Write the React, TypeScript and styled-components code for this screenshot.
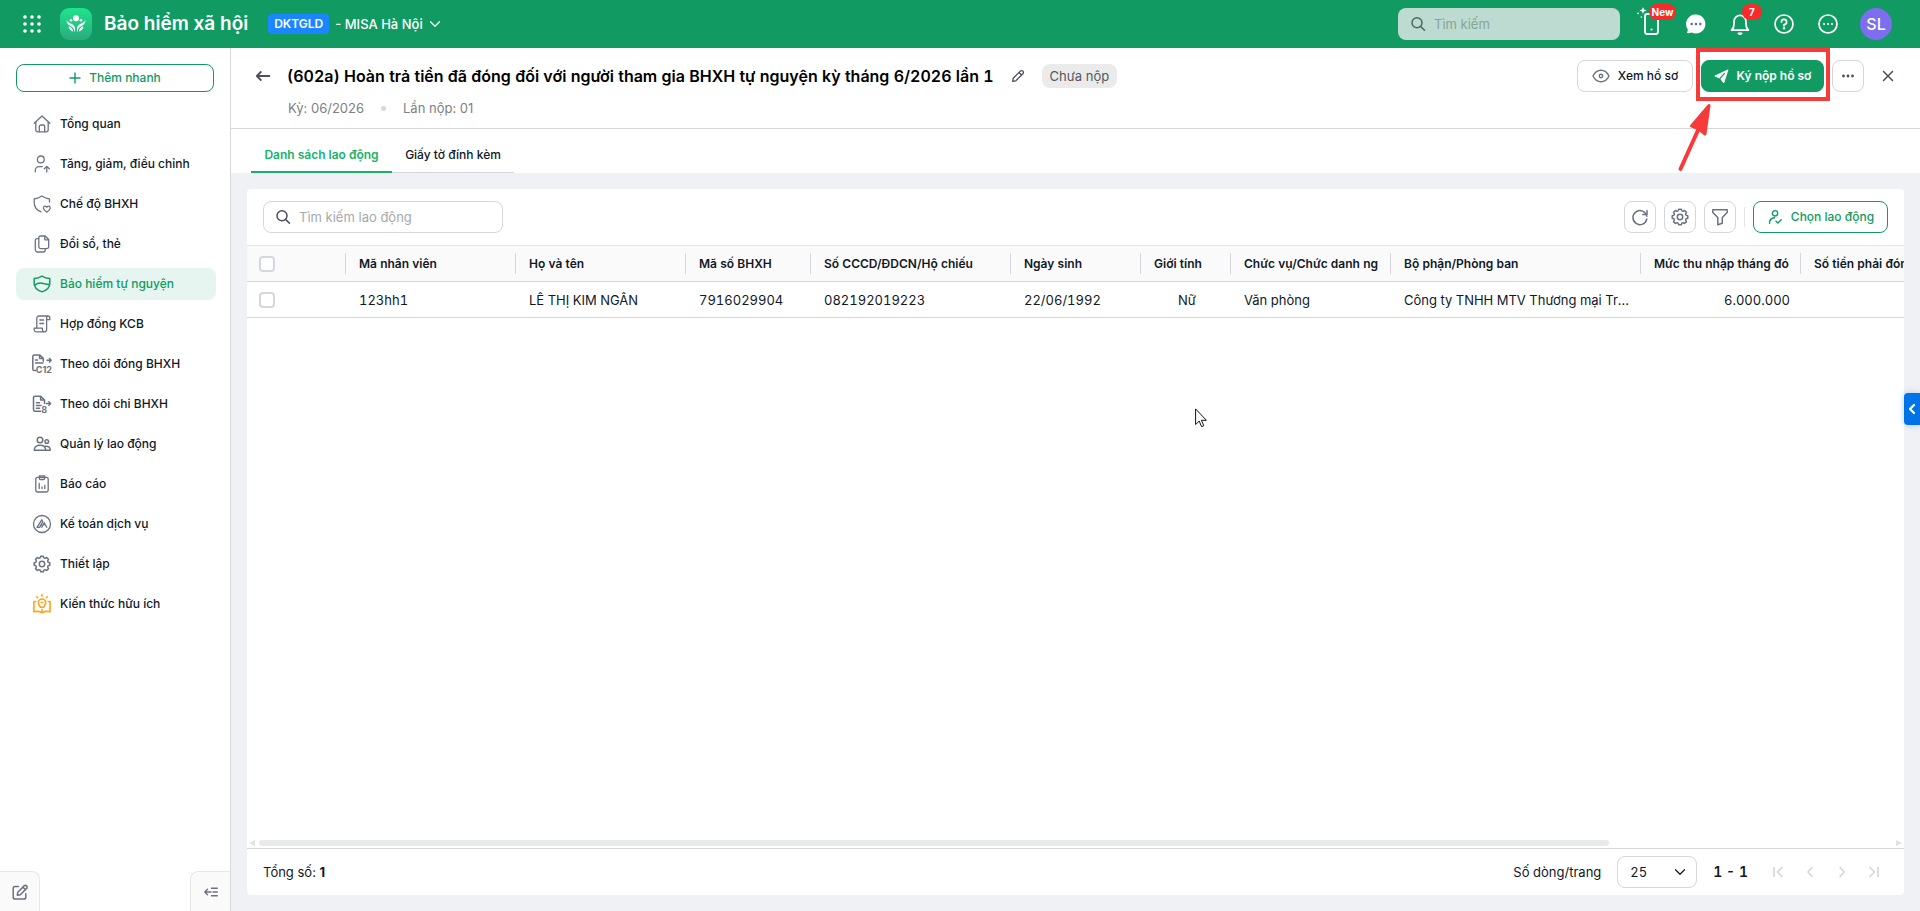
import React from "react";
import styled, { createGlobalStyle } from "styled-components";

const GlobalStyle = createGlobalStyle`
  * { box-sizing: border-box; }
  body { margin: 0; }
  body, button, input, select, table {
    font-family: Inter, "Liberation Sans", sans-serif;
    font-size: 13px;
    line-height: 20px;
    color: #111827;
  }
  button { cursor: pointer; padding: 0; margin: 0; }
  a { text-decoration: none; color: inherit; }
`;

const GREEN = "#119a62";
const LINE = "#d5d7dc";
const ICON = "#6b7280";

/* ---------- layout ---------- */
const Page = styled.div`
  display: flex;
  flex-direction: column;
  min-height: 100vh;
  background: #f0f1f4;
`;
const TopBar = styled.header`
  display: flex;
  align-items: center;
  height: 48px;
  padding: 0 28px 0 16px;
  background: ${GREEN};
  color: #fff;
`;
const Body = styled.div`
  display: flex;
  flex: 1;
`;
const Sidebar = styled.aside`
  display: flex;
  flex-direction: column;
  flex: none;
  width: 231px;
  background: #fff;
  border-right: 1px solid ${LINE};
`;
const Main = styled.main`
  display: flex;
  flex-direction: column;
  flex: 1;
  min-width: 0;
`;

/* ---------- top bar ---------- */
const BarButton = styled.button<{ $w?: number }>`
  position: relative;
  display: flex;
  align-items: center;
  justify-content: center;
  flex: none;
  width: ${(p) => p.$w ?? 44}px;
  height: 48px;
  border: 0;
  background: none;
  color: #fff;
`;
const Logo = styled.svg`
  flex: none;
  margin: 0 12px;
`;
const AppName = styled.h1`
  margin: 0 20px 0 0;
  font-size: 19px;
  line-height: 24px;
  font-weight: 600;
`;
const CompanyTag = styled.span`
  margin-right: 6px;
  padding: 0 6px;
  border-radius: 4px;
  background: #1a86ff;
  font-size: 12px;
  font-weight: 600;
`;
const Company = styled.button`
  display: flex;
  align-items: center;
  gap: 6px;
  border: 0;
  background: none;
  color: #fff;
  font-weight: 500;
`;
const Spacer = styled.div`
  flex: 1;
`;
const GlobalSearch = styled.label`
  display: flex;
  align-items: center;
  gap: 8px;
  width: 222px;
  height: 32px;
  padding: 0 12px;
  margin-right: 10px;
  border-radius: 8px;
  background: #bddbd0;
  color: #4b6b60;
`;
const PlainInput = styled.input<{ $hint: string }>`
  flex: 1;
  min-width: 0;
  padding: 0;
  border: 0;
  outline: 0;
  background: none;
  &::placeholder { color: ${(p) => p.$hint}; opacity: 1; }
`;
const Badge = styled.span<{ $left: number; $w: number }>`
  position: absolute;
  top: 4px;
  left: ${(p) => p.$left}px;
  width: ${(p) => p.$w}px;
  height: 16px;
  border-radius: 8px;
  background: #f92a2a;
  color: #fff;
  font-size: 10px;
  line-height: 16px;
  font-weight: 700;
  text-align: center;
`;
const Avatar = styled.button`
  width: 32px;
  height: 32px;
  margin-left: 10px;
  border: 0;
  border-radius: 50%;
  background: #7c6eee;
  color: #fff;
  font-size: 16px;
  font-weight: 500;
`;

/* ---------- sidebar ---------- */
const QuickAdd = styled.button`
  display: flex;
  align-items: center;
  justify-content: center;
  gap: 8px;
  height: 28px;
  margin: 16px;
  border: 1px solid ${GREEN};
  border-radius: 8px;
  background: #fff;
  color: ${GREEN};
  font-size: 12px;
  font-weight: 500;
`;
const Nav = styled.nav`
  display: flex;
  flex-direction: column;
  gap: 8px;
  padding: 0 14px 0 16px;
`;
const NavLink = styled.a<{ $active?: boolean }>`
  display: flex;
  align-items: center;
  gap: 8px;
  height: 32px;
  padding-left: 16px;
  border-radius: 8px;
  font-size: 12px;
  font-weight: 500;
  background: ${(p) => (p.$active ? "#e6f5ef" : "none")};
  color: ${(p) => (p.$active ? GREEN : "#111827")};
  svg { color: ${(p) => (p.$active ? GREEN : ICON)}; }
`;
const SideFoot = styled.div`
  display: flex;
  justify-content: space-between;
  margin-top: auto;
`;
const CornerButton = styled.button<{ $side: "left" | "right" }>`
  display: flex;
  align-items: center;
  justify-content: center;
  width: 40px;
  height: 40px;
  border: 1px solid #e5e7eb;
  border-bottom: 0;
  border-${(p) => p.$side}: 0;
  border-radius: ${(p) => (p.$side === "left" ? "0 8px 0 0" : "8px 0 0 0")};
  background: #fafafa;
  color: ${ICON};
`;

/* ---------- document header ---------- */
const DocHeader = styled.section`
  padding: 12px 8px 10px 20px;
  background: #fff;
  border-bottom: 1px solid ${LINE};
`;
const DocTop = styled.div`
  display: flex;
  align-items: center;
  height: 32px;
`;
const GhostButton = styled.button<{ $w: number }>`
  display: flex;
  align-items: center;
  justify-content: center;
  flex: none;
  width: ${(p) => p.$w}px;
  height: 32px;
  border: 0;
  background: none;
  color: #4b4f58;
`;
const DocTitle = styled.h2`
  margin: 0 8px 0 12px;
  font-size: 16px;
  line-height: 24px;
  font-weight: 600;
  font-variant-numeric: tabular-nums;
  color: #000;
  white-space: nowrap;
`;
const Status = styled.span`
  padding: 0 8px;
  margin-left: 8px;
  border-radius: 8px;
  background: #ebebeb;
  color: #55575c;
  line-height: 24px;
`;
const DocMeta = styled.div`
  display: flex;
  align-items: center;
  gap: 17px;
  margin-top: 4px;
  padding: 2px 0 0 37px;
  color: #7c7f86;
`;
const Dot = styled.i`
  width: 5px;
  height: 5px;
  border-radius: 50%;
  background: #d5d7dc;
`;
const Button = styled.button<{ $kind?: "primary" | "outline"; $w?: number }>`
  display: flex;
  align-items: center;
  justify-content: center;
  gap: 8px;
  flex: none;
  width: ${(p) => p.$w ?? 32}px;
  height: 32px;
  border-radius: 8px;
  border: 1px solid ${(p) => (p.$kind ? GREEN : LINE)};
  background: ${(p) => (p.$kind === "primary" ? GREEN : "#fff")};
  color: ${(p) => (p.$kind === "primary" ? "#fff" : p.$kind === "outline" ? GREEN : "#111827")};
  font-size: 12px;
  font-weight: ${(p) => (p.$kind === "primary" ? 600 : 500)};
`;
const Highlight = styled.div`
  position: relative;
  margin: 0 8px;
`;
const HighlightFrame = styled.div`
  position: absolute;
  inset: -12px -6px -9px -5px;
  border: 4px solid #f63b3b;
  pointer-events: none;
`;
const HighlightArrow = styled.svg`
  position: absolute;
  top: 42px;
  left: -24px;
  pointer-events: none;
`;

/* ---------- tabs ---------- */
const Tabs = styled.div`
  display: flex;
  height: 44px;
  padding-left: 20px;
  background: #fff;
`;
const Tab = styled.button<{ $active?: boolean; $w: number }>`
  width: ${(p) => p.$w}px;
  padding-top: 9px;
  border: 0;
  border-bottom: ${(p) => (p.$active ? "2px solid #16b36c" : `1px solid ${LINE}`)};
  background: none;
  color: ${(p) => (p.$active ? "#16b36c" : "#111827")};
  font-size: 12px;
  font-weight: ${(p) => (p.$active ? 600 : 500)};
`;

/* ---------- list panel ---------- */
const Panel = styled.section`
  position: relative;
  display: flex;
  flex-direction: column;
  flex: 1;
  margin: 16px;
  border-radius: 4px;
  background: #fff;
  overflow: hidden;
`;
const Toolbar = styled.div`
  display: flex;
  align-items: center;
  gap: 8px;
  padding: 12px 16px;
  button { color: ${ICON}; }
  button:last-child { color: ${GREEN}; }
`;
const ListSearch = styled.label`
  display: flex;
  align-items: center;
  gap: 8px;
  width: 240px;
  height: 32px;
  padding: 0 11px;
  border: 1px solid ${LINE};
  border-radius: 8px;
  color: #4b4f58;
`;
const Rule = styled.i`
  width: 1px;
  height: 20px;
  background: #e2e4e8;
`;
const TableArea = styled.div`
  flex: 1;
  overflow: hidden;
`;
const Table = styled.table`
  width: 2003px;
  table-layout: fixed;
  border-collapse: separate;
  border-spacing: 0;
  font-variant-numeric: tabular-nums;
`;
const HeadCell = styled.th`
  height: 37px;
  padding: 0;
  border-top: 1px solid #e5e7eb;
  border-bottom: 1px solid ${LINE};
  background: #fafafa;
  text-align: left;
  font-size: 12px;
  font-weight: 600;
`;
const HeadInner = styled.div`
  display: flex;
  align-items: center;
  height: 21px;
  padding: 0 10px 0 13px;
  border-right: 1px solid ${LINE};
  line-height: 22px;
  white-space: nowrap;
  overflow: hidden;
`;
const Cell = styled.td<{ $align?: string }>`
  height: 36px;
  padding: 0 11px 0 13px;
  border-bottom: 1px solid ${LINE};
  text-align: ${(p) => p.$align ?? "left"};
  overflow: hidden;
  white-space: nowrap;
  text-overflow: ellipsis;
`;
const Check = styled.input`
  display: block;
  flex: none;
  width: 16px;
  height: 16px;
  margin: 0 0 0 -1px;
  border: 2px solid #d5d7de;
  border-radius: 4px;
  background: #fff;
  appearance: none;
`;
const ScrollRow = styled.div`
  display: flex;
  align-items: center;
  gap: 4px;
  height: 10px;
  padding: 0 2px;
  color: #e0e2e5;
`;
const Track = styled.div`
  flex: 1;
`;
const Thumb = styled.div`
  width: 82.7%;
  height: 6px;
  border-radius: 3px;
  background: #e8e9eb;
`;
const Footer = styled.footer`
  display: flex;
  align-items: center;
  height: 47px;
  padding: 0 14px 0 16px;
  border-top: 1px solid ${LINE};
`;
const SelectBox = styled.div`
  position: relative;
  margin: 0 16px;
  svg {
    position: absolute;
    top: 10px;
    right: 11px;
    pointer-events: none;
  }
`;
const Select = styled.select`
  display: block;
  width: 80px;
  height: 32px;
  padding: 0 12px;
  border: 1px solid ${LINE};
  border-radius: 8px;
  background: #fff;
  font-variant-numeric: tabular-nums;
  appearance: none;
`;
const PageRange = styled.b`
  min-width: 32px;
  font-size: 14px;
  font-weight: 600;
  font-variant-numeric: tabular-nums;
`;
const Pager = styled.div`
  display: flex;
  margin-left: 14px;
  button { color: #d3d5d9; }
`;
const SideHandle = styled.button`
  position: fixed;
  top: 393px;
  right: 0;
  display: flex;
  align-items: center;
  justify-content: center;
  width: 16px;
  height: 32px;
  border: 0;
  border-radius: 4px 0 0 4px;
  background: #0073e6;
  color: #fff;
  box-shadow: 0 0 6px rgba(0, 115, 230, 0.3);
`;
const Pointer = styled.svg`
  position: absolute;
  top: 219px;
  left: 948px;
  pointer-events: none;
`;

/* ---------- icons ---------- */
type IconProps = { size?: number; sw?: number; box?: number; children: React.ReactNode };
const Icon = ({ size = 20, sw = 1.3, box = 20, children }: IconProps) => (
  <svg width={size} height={size} viewBox={`0 0 ${box} ${box}`} fill="none" stroke="currentColor"
    strokeWidth={sw} strokeLinecap="round" strokeLinejoin="round" aria-hidden="true">
    {children}
  </svg>
);

const SearchIcon = () => (
  <Icon size={16} box={16} sw={1.5}>
    <circle cx="7" cy="6.8" r="5" />
    <path d="M10.8 10.6 14.5 14.3" />
  </Icon>
);
const GearShape = () => (
  <>
    <path d="M8.7 2.200h2.600l.5 1.700 1.200.5 1.600-.9 1.900 1.900-.9 1.600.5 1.200 1.700.5v2.600l-1.700.5-.5 1.200.9 1.600-1.900 1.900-1.600-.9-1.200.5-.5 1.700H8.700l-.5-1.700-1.200-.5-1.600.9-1.900-1.900.9-1.600-.5-1.200-1.700-.5V8.700l1.700-.5.5-1.200-.9-1.600 1.900-1.900 1.600.9 1.200-.5z" />
    <circle cx="10" cy="10" r="2.700" />
  </>
);
const Chevron = ({ dir, size = 16 }: { dir: "left" | "right" | "down"; size?: number }) => (
  <Icon size={size} box={16} sw={1.6}>
    <path d={{ left: "M10 3.500 5.800 8 10 12.500", right: "M6 3.500 10.200 8 6 12.500", down: "M2 5 8 11 14 5" }[dir]} />
  </Icon>
);

const icons = {
  home: (
    <Icon>
      <path d="M2.200 9.300 10 2l7.800 7.300" />
      <path d="M3.800 8v8a1.800 1.800 0 0 0 1.800 1.800h8.800a1.800 1.800 0 0 0 1.800-1.800V8" />
      <path d="M7.300 17.600v-5a1.600 1.600 0 0 1 1.600-1.600h2.200a1.600 1.600 0 0 1 1.600 1.600v5" />
    </Icon>
  ),
  userUp: (
    <Icon>
      <circle cx="8.800" cy="5.400" r="3.400" />
      <path d="M3.300 17.800v-1.600a3.600 3.600 0 0 1 3.600-3.600h3.300M14.800 18v-5.200M12.300 14.800l2.500-2.400 2.500 2.400" />
    </Icon>
  ),
  shieldHeart: (
    <Icon>
      <path d="M9 17.800c-4-1.500-6.800-4.600-6.800-9.300V4.800C5 4.600 7.600 3.500 9.800 2c2.300 1.500 4.800 2.600 7.700 2.800V8" />
      <path d="M14.800 18.200c-2-1.300-3.400-2.500-3.400-4.300 0-1 .7-1.800 1.700-1.800.8 0 1.400.5 1.700 1.200.3-.7.900-1.200 1.700-1.200 1 0 1.700.8 1.700 1.800 0 1.800-1.400 3-3.400 4.300z" />
    </Icon>
  ),
  copy: (
    <Icon>
      <path d="M8.600 2h4.600l3.500 3.500v7.300a1.800 1.800 0 0 1-1.800 1.800H8.600a1.800 1.800 0 0 1-1.800-1.800V3.800A1.800 1.800 0 0 1 8.600 2zM12.800 2.200v3.600h3.700" />
      <path d="M6.600 4.600H5.100a1.800 1.800 0 0 0-1.800 1.800v9.400A2.200 2.200 0 0 0 5.500 18h5.800a1.900 1.900 0 0 0 1.900-1.900v-1.300" />
    </Icon>
  ),
  shield: (
    <Icon sw={1.5}>
      <path d="M10 2.100c2.300 1.400 5 2.300 7.800 2.500v5c0 4-3.200 6.800-7.800 8.300-4.600-1.500-7.800-4.300-7.800-8.300v-5C5 4.400 7.700 3.500 10 2.100z" />
      <path d="M2.800 11.300C5 9.300 7.400 8.700 10 9.200s5 1.500 7.300 1.300" />
    </Icon>
  ),
  scroll: (
    <Icon>
      <path d="M4.800 14V4.200A2.200 2.200 0 0 1 7 2h8.800c1.300 0 2 .8 2 2v1.600h-3.200" />
      <path d="M15.800 2c-.8.400-1.200 1-1.200 2v11.700a2.100 2.100 0 0 1-2.100 2.100H4.200A2 2 0 0 1 2.200 16v-1.800h8.200V16c0 1 .7 1.800 1.800 1.800M7.800 6h3.800M7.800 9.500h3.800" />
    </Icon>
  ),
  c12: (
    <Icon sw={1.5}>
      <path d="M3.500 16.500H2A1.500 1.500 0 0 1 .8 15V2.500A1.500 1.500 0 0 1 2.300 1h5.500l3.500 3.400v2.800M7.600 1.200v3.300h3.500M3.500 6h2M3.500 9h7.500M15 6.300h4M17.500 4.500l1.700 1.800-1.700 1.800" />
      <text x="3.800" y="19.300" fontSize="9" fontWeight="700" fill="currentColor" stroke="none" fontFamily="Inter">C12</text>
    </Icon>
  ),
  doc8: (
    <Icon sw={1.5}>
      <path d="M8.500 17.300H3A1.500 1.500 0 0 1 1.500 15.800V3.700A1.500 1.500 0 0 1 3 2.200h5.800L12.500 6v3.500M8.600 2.300V6h3.700M4.500 8.800h3M4.500 11.500h4.500M4.500 14.200h3M14.500 9.500h4M16.900 7.800l1.700 1.700-1.700 1.700" />
      <text x="9.300" y="18.600" fontSize="9" fontWeight="700" fill="currentColor" stroke="none" fontFamily="Inter">8</text>
    </Icon>
  ),
  people: (
    <Icon sw={1.5}>
      <circle cx="8" cy="6" r="2.800" />
      <circle cx="14.800" cy="7.500" r="1.800" />
      <path d="M2.300 16.200c0-3.200 2.400-5 5.700-5s5.700 1.800 5.700 5zM13.500 12.200c2.700-.4 4.700 1 4.700 4h-4" />
    </Icon>
  ),
  clipboard: (
    <Icon>
      <rect x="3.800" y="3.300" width="12.400" height="14.700" rx="1.800" />
      <path d="M7.300 2h5.400v2.300a1.200 1.200 0 0 1-1.200 1.200h-3a1.200 1.200 0 0 1-1.200-1.200zM7.200 14.500V9.500M10 14.500v-1.500M12.800 14.500v-3" />
    </Icon>
  ),
  accounting: (
    <Icon>
      <circle cx="10" cy="10" r="8.500" />
      <path d="M5 13.300 9.700 5.800l1 1.800-2.900 5.700zM9.800 13.300l2.400-4.600 2.600 4.600M8.300 11.400l4-.8" />
    </Icon>
  ),
  gear: <Icon sw={1.5}><GearShape /></Icon>,
  book: (
    <svg width="20" height="20" viewBox="0 0 20 20" fill="none" stroke="#ffa31a" strokeWidth="1.600" strokeLinecap="round" strokeLinejoin="round" aria-hidden="true">
      <path d="M3.800 7.500H1.900v10.300c2.900-.7 5.700-.5 8.100.9 2.400-1.400 5.200-1.600 8.100-.9V7.500h-1.900" />
      <path d="M8.300 13.300c0-1.500-2-2.300-2-4.600a3.700 3.700 0 0 1 7.400 0c0 2.300-2 3.100-2 4.600zM10 15.200v2.800M10 .9v1.300M4.800 2.800l.8.800M15.200 2.800l-.8.800M9.300 8.500h1.400" />
    </svg>
  ),
};

const nav: { label: string; icon: keyof typeof icons; active?: boolean }[] = [
  { label: "Tổng quan", icon: "home" },
  { label: "Tăng, giảm, điều chỉnh", icon: "userUp" },
  { label: "Chế độ BHXH", icon: "shieldHeart" },
  { label: "Đổi sổ, thẻ", icon: "copy" },
  { label: "Bảo hiểm tự nguyện", icon: "shield", active: true },
  { label: "Hợp đồng KCB", icon: "scroll" },
  { label: "Theo dõi đóng BHXH", icon: "c12" },
  { label: "Theo dõi chi BHXH", icon: "doc8" },
  { label: "Quản lý lao động", icon: "people" },
  { label: "Báo cáo", icon: "clipboard" },
  { label: "Kế toán dịch vụ", icon: "accounting" },
  { label: "Thiết lập", icon: "gear" },
  { label: "Kiến thức hữu ích", icon: "book" },
];

const columns: { title: string; value: string; width: number; align?: string }[] = [
  { title: "Mã nhân viên", value: "123hh1", width: 170 },
  { title: "Họ và tên", value: "LÊ THỊ KIM NGÂN", width: 170 },
  { title: "Mã số BHXH", value: "7916029904", width: 125 },
  { title: "Số CCCD/ĐDCN/Hộ chiếu", value: "082192019223", width: 200 },
  { title: "Ngày sinh", value: "22/06/1992", width: 130 },
  { title: "Giới tính", value: "Nữ", width: 90, align: "center" },
  { title: "Chức vụ/Chức danh ng", value: "Văn phòng", width: 160 },
  { title: "Bộ phận/Phòng ban", value: "Công ty TNHH MTV Thương mại Trường An", width: 250 },
  { title: "Mức thu nhập tháng đó", value: "6.000.000", width: 160, align: "right" },
  { title: "Số tiền phải đóng", value: "", width: 449, align: "right" },
];

export default function App() {
  return (
    <Page>
      <GlobalStyle />
      <TopBar>
        <BarButton $w={32} aria-label="Ứng dụng">
          <svg width="18" height="18" viewBox="0 0 18 18" fill="#fff" aria-hidden="true">
            {[2, 9, 16].map((y) => [2, 9, 16].map((x) => <circle key={`${x}-${y}`} cx={x} cy={y} r="1.8" />))}
          </svg>
        </BarButton>
        <Logo width="32" height="32" viewBox="0 0 32 32" aria-hidden="true">
          <defs>
            <linearGradient id="logo" x1="0" y1="0" x2="0" y2="1">
              <stop offset="0" stopColor="#1fe48c" />
              <stop offset="1" stopColor="#2aab7d" />
            </linearGradient>
          </defs>
          <rect width="32" height="32" rx="9" fill="url(#logo)" />
          <g fill="#fff">
            <circle cx="16" cy="10.300" r="3" />
            <circle cx="11" cy="12.300" r="1.300" />
            <circle cx="21" cy="12.300" r="1.300" />
            <path d="M6.500 12c.2 3.400 1.800 5 4 6 2.300 1 3.800 2.700 4.200 6.500 1-3.400.4-6.300-2-7.900-2.100-1.400-4.800-1.800-6.200-4.600zM25.500 12c-.2 3.400-1.800 5-4 6-2.300 1-3.800 2.700-4.200 6.500-1-3.400-.4-6.300 2-7.900 2.100-1.400 4.800-1.800 6.200-4.600z" />
            <path d="M8.600 18.300c.3 2.900 1.800 4.400 4.600 5.100-.6-2.700-1.900-4.200-4.600-5.100zM23.400 18.300c-.3 2.900-1.800 4.400-4.600 5.100.6-2.700 1.900-4.200 4.600-5.100z" />
          </g>
        </Logo>
        <AppName>Bảo hiểm xã hội</AppName>
        <CompanyTag>DKTGLD</CompanyTag>
        <Company>- MISA Hà Nội <Chevron dir="down" size={12} /></Company>
        <Spacer />
        <GlobalSearch>
          <SearchIcon />
          <PlainInput $hint="#84a699" placeholder="Tìm kiếm" aria-label="Tìm kiếm" />
        </GlobalSearch>
        <BarButton aria-label="Ứng dụng di động">
          <svg width="30" height="34" viewBox="0 0 30 34" fill="none" aria-hidden="true">
            <rect x="8" y="7" width="13" height="20" rx="2.200" stroke="#fff" strokeWidth="1.800" />
            <path d="m6 0 1 2.500 2.500 1-2.500 1L6 7 5 4.500l-2.500-1 2.500-1z" fill="#fff" />
            <circle cx="1" cy="6.300" r=".9" fill="#fff" />
            <circle cx="4.300" cy="10" r=".8" fill="#fff" />
            <circle cx="14.500" cy="22.500" r="1.100" fill="#fff" />
          </svg>
          <Badge $left={19} $w={27}>New</Badge>
        </BarButton>
        <BarButton aria-label="Trò chuyện">
          <svg width="20" height="20" viewBox="0 0 20 20" aria-hidden="true">
            <path d="M10 .6c5.200 0 9.400 4.200 9.400 9.400s-4.200 9.400-9.400 9.400c-1.600 0-3-.4-4.300-1-1.600.7-3.300.9-4.900.6.800-1.200 1-2.500.9-3.800A9.400 9.400 0 0 1 10 .6z" fill="#fff" />
            <circle cx="5.700" cy="10" r="1.200" fill="#4a5bd8" />
            <circle cx="10" cy="10" r="1.200" fill="#4a5bd8" />
            <circle cx="14.300" cy="10" r="1.200" fill="#4a5bd8" />
          </svg>
        </BarButton>
        <BarButton aria-label="Thông báo">
          <svg width="22" height="24" viewBox="0 0 22 24" fill="none" stroke="#fff" strokeWidth="1.800" strokeLinejoin="round" strokeLinecap="round" aria-hidden="true">
            <path d="M2.600 18.200c1.900-2 2.500-3.600 2.500-6.700V9.200a5.900 5.900 0 0 1 11.800 0v2.300c0 3.100.6 4.700 2.500 6.700z" />
            <path d="M9.500 21.300c.4.900 2.600.9 3 0z" fill="#fff" />
          </svg>
          <Badge $left={24} $w={20}>7</Badge>
        </BarButton>
        <BarButton aria-label="Trợ giúp">
          <Icon sw={1.7}>
            <circle cx="10" cy="10" r="9" />
            <path d="M7.400 8A2.600 2.600 0 1 1 10 10.600v1.200" />
            <circle cx="10" cy="14.300" r=".4" fill="currentColor" />
          </Icon>
        </BarButton>
        <BarButton aria-label="Thêm">
          <Icon sw={1.7}>
            <circle cx="10" cy="10" r="9" />
            <path d="M6 10h.1M10 10h.1M14 10h.1" strokeWidth="2" />
          </Icon>
        </BarButton>
        <Avatar>SL</Avatar>
      </TopBar>

      <Body>
        <Sidebar>
          <QuickAdd>
            <Icon size={12} box={12} sw={1.4}><path d="M6 1v10M1 6h10" /></Icon>
            Thêm nhanh
          </QuickAdd>
          <Nav>
            {nav.map((n) => (
              <NavLink key={n.label} href="#" $active={n.active}>
                {icons[n.icon]}
                {n.label}
              </NavLink>
            ))}
          </Nav>
          <SideFoot>
            <CornerButton $side="left" aria-label="Góp ý">
              <Icon size={18} box={18} sw={1.5}>
                <path d="M7.500 3.500H4A1.800 1.800 0 0 0 2.200 5.300v9A1.800 1.800 0 0 0 4 16.100h9a1.800 1.800 0 0 0 1.800-1.800v-3.500" />
                <path d="M6.300 12.200l.5-3 6.300-6.300a1.700 1.700 0 0 1 2.500 2.500l-6.300 6.300zM12 4.200l2.400 2.400" />
              </Icon>
            </CornerButton>
            <CornerButton $side="right" aria-label="Thu gọn">
              <Icon size={14} box={14} sw={1.4}>
                <path d="M.8 7H7M3.500 4.300.8 7l2.700 2.700M7.500 3.200h5.800M9 7h4.300M7.500 10.800h5.800" />
              </Icon>
            </CornerButton>
          </SideFoot>
        </Sidebar>

        <Main>
          <DocHeader>
            <DocTop>
              <GhostButton $w={24} aria-label="Quay lại">
                <Icon size={16} box={16} sw={1.8}><path d="M1.800 8h12.600M5.800 4 1.800 8l4 4" /></Icon>
              </GhostButton>
              <DocTitle>(602a) Hoàn trả tiền đã đóng đối với người tham gia BHXH tự nguyện kỳ tháng 6/2026 lần 1</DocTitle>
              <GhostButton $w={32} aria-label="Sửa">
                <Icon size={14} box={14} sw={1.3}>
                  <path d="M1.700 12.300l.5-3.100 7.100-7.100a1.800 1.800 0 0 1 2.600 2.600L4.800 11.800zM8 3.500 10.500 6" />
                </Icon>
              </GhostButton>
              <Status>Chưa nộp</Status>
              <Spacer />
              <Button $w={116}>
                <svg width="18" height="14" viewBox="0 0 18 14" fill="none" stroke={ICON} strokeWidth="1.400" aria-hidden="true">
                  <path d="M1 7c1.800-3.700 4.600-5.800 8-5.800S15.200 3.300 17 7c-1.800 3.700-4.600 5.800-8 5.800S2.800 10.700 1 7z" />
                  <circle cx="9" cy="7" r="1.700" />
                </svg>
                Xem hồ sơ
              </Button>
              <Highlight>
                <Button $kind="primary" $w={123}>
                  <svg width="15" height="15" viewBox="0 0 15 15" fill="#fff" aria-hidden="true">
                    <path d="M14 .8.8 7l5 2.200L9.800 14z" stroke="#fff" strokeWidth=".8" strokeLinejoin="round" />
                    <path d="M6 9.400 10.300 4.600" stroke={GREEN} strokeWidth="1.300" strokeLinecap="round" />
                    <path d="M5.400 9.600 5 13.500l2.500-2.300z" fill={GREEN} />
                  </svg>
                  Ký nộp hồ sơ
                </Button>
                <HighlightFrame />
                <HighlightArrow width="36" height="72" viewBox="0 0 36 72" aria-hidden="true">
                  <path d="M3.500 67 22 26" stroke="#f63b3b" strokeWidth="4" strokeLinecap="round" />
                  <path d="M32 3.500 28 32 22.500 27.500 14.500 24z" fill="#f63b3b" stroke="#f63b3b" strokeWidth="3" strokeLinejoin="round" />
                </HighlightArrow>
              </Highlight>
              <Button aria-label="Thao tác khác">
                <svg width="14" height="4" viewBox="0 0 14 4" fill="#4b4f58" aria-hidden="true">
                  <circle cx="2.500" cy="2" r="1.400" /><circle cx="7" cy="2" r="1.400" /><circle cx="11.500" cy="2" r="1.400" />
                </svg>
              </Button>
              <GhostButton $w={48} aria-label="Đóng">
                <Icon size={12} box={12} sw={1.5}><path d="M1.500 1.500l9 9M10.500 1.500l-9 9" /></Icon>
              </GhostButton>
            </DocTop>
            <DocMeta>
              <span>Kỳ: 06/2026</span>
              <Dot />
              <span>Lần nộp: 01</span>
            </DocMeta>
          </DocHeader>

          <Tabs role="tablist">
            <Tab role="tab" $active $w={141}>Danh sách lao động</Tab>
            <Tab role="tab" $w={122}>Giấy tờ đính kèm</Tab>
          </Tabs>

          <Panel>
            <Toolbar>
              <ListSearch>
                <SearchIcon />
                <PlainInput $hint="#a5a8af" placeholder="Tìm kiếm lao động" aria-label="Tìm kiếm lao động" />
              </ListSearch>
              <Spacer />
              <Button aria-label="Tải lại">
                <Icon size={18} box={18} sw={1.5}>
                  <path d="M15.800 8.200A7 7 0 1 0 15.800 11M16 2.500V6.600h-4.200" />
                </Icon>
              </Button>
              <Button aria-label="Tùy chỉnh"><Icon sw={1.5}><GearShape /></Icon></Button>
              <Button aria-label="Lọc">
                <Icon size={18} box={18} sw={1.5}>
                  <path d="M1.800 1.800h14.400v2.700l-4.900 5v5.700l-4.500 1.500V9.500l-5-5z" />
                </Icon>
              </Button>
              <Rule />
              <Button $kind="outline" $w={135}>
                <Icon size={16} box={16} sw={1.4}>
                  <circle cx="8" cy="4.300" r="2.700" />
                  <path d="M2.500 14.300c0-3.300 1.600-5.300 5-5.600M9 12.200l1.900 1.900 3.300-3.300" />
                </Icon>
                Chọn lao động
              </Button>
            </Toolbar>

            <TableArea>
              <Table>
                <colgroup>
                  <col width="99" />
                  {columns.map((c) => <col key={c.title} width={c.width} />)}
                </colgroup>
                <thead>
                  <tr>
                    <HeadCell>
                      <HeadInner><Check type="checkbox" aria-label="Chọn tất cả" /></HeadInner>
                    </HeadCell>
                    {columns.map((c) => (
                      <HeadCell key={c.title}><HeadInner>{c.title}</HeadInner></HeadCell>
                    ))}
                  </tr>
                </thead>
                <tbody>
                  <tr>
                    <Cell><Check type="checkbox" aria-label="Chọn 123hh1" /></Cell>
                    {columns.map((c) => <Cell key={c.title} $align={c.align}>{c.value}</Cell>)}
                  </tr>
                </tbody>
              </Table>
            </TableArea>
            <ScrollRow>
              <svg width="6" height="6" viewBox="0 0 6 6" fill="currentColor" aria-hidden="true"><path d="M6 0v6L0 3z" /></svg>
              <Track><Thumb /></Track>
              <svg width="6" height="6" viewBox="0 0 6 6" fill="currentColor" aria-hidden="true"><path d="M0 0v6l6-3z" /></svg>
            </ScrollRow>
            <Footer>
              <span>Tổng số: <b>1</b></span>
              <Spacer />
              <label htmlFor="page-size">Số dòng/trang</label>
              <SelectBox>
                <Select id="page-size" defaultValue="25"><option>25</option></Select>
                <Chevron dir="down" size={12} />
              </SelectBox>
              <PageRange>1 - 1</PageRange>
              <Pager>
                <GhostButton $w={32} aria-label="Trang đầu"><Icon size={16} box={16} sw={1.6}><path d="M4 3.500v9M12 3.500 7.500 8l4.500 4.500" /></Icon></GhostButton>
                <GhostButton $w={32} aria-label="Trang trước"><Chevron dir="left" /></GhostButton>
                <GhostButton $w={32} aria-label="Trang sau"><Chevron dir="right" /></GhostButton>
                <GhostButton $w={32} aria-label="Trang cuối"><Icon size={16} box={16} sw={1.6}><path d="M12 3.500v9M4 3.500 8.500 8 4 12.500" /></Icon></GhostButton>
              </Pager>
            </Footer>
            <Pointer width="13" height="20" viewBox="0 0 13 20" aria-hidden="true">
              <path d="M.6.900v15.600l3.600-3.400 2.400 5.600 2.200-1-2.400-5.400h5z" fill="#fff" stroke="#111" strokeWidth="1" />
            </Pointer>
          </Panel>
        </Main>
      </Body>
      <SideHandle aria-label="Mở bảng bên"><Icon size={12} box={12} sw={2.2}><path d="M8 2 4 6l4 4" /></Icon></SideHandle>
    </Page>
  );
}
